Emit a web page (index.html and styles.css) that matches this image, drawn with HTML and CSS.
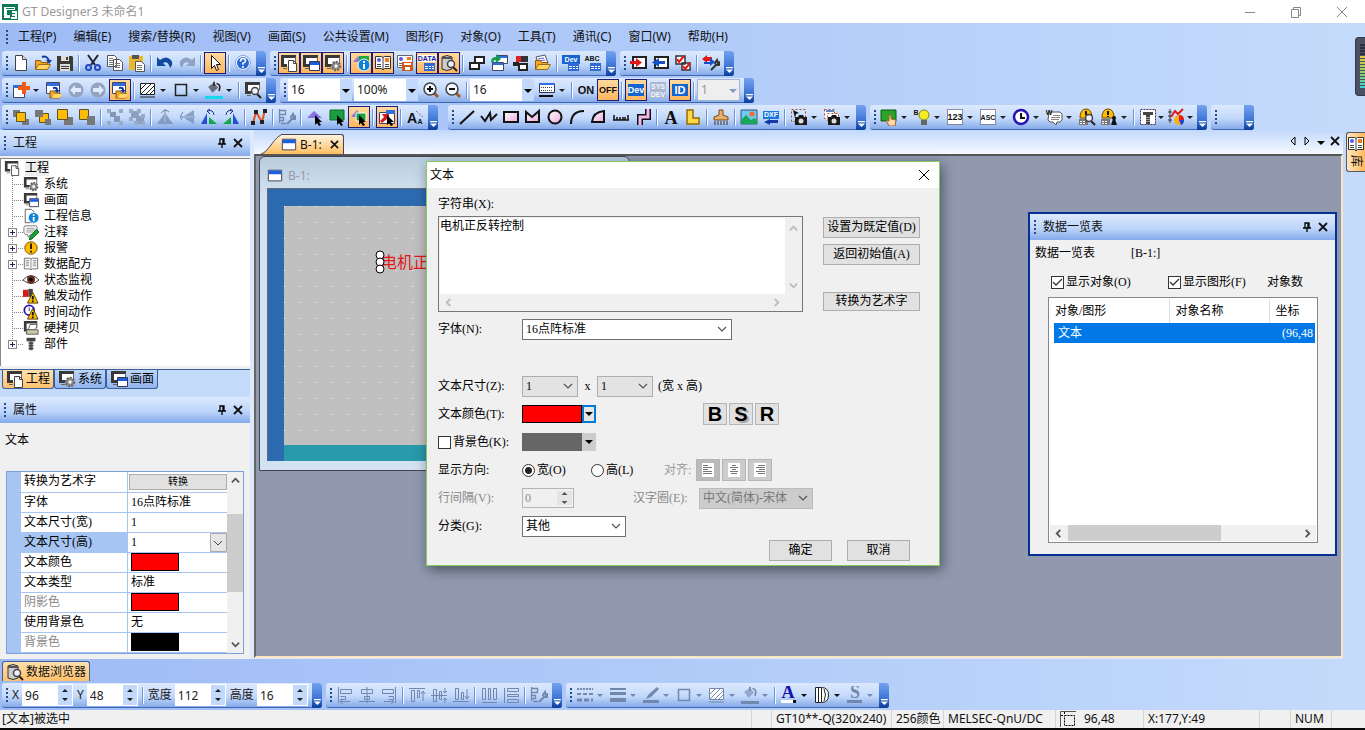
FILE: index.html
```html
<!DOCTYPE html>
<html lang="zh-CN">
<head>
    <meta charset="UTF-8">
    <meta name="viewport" content="width=device-width, initial-scale=1.0">
    <title>GT Designer3 未命名1</title>
    <link rel="stylesheet" href="styles.css">
</head>
<body>
<svg class="paints" aria-hidden="true">
    <linearGradient id="pink" x1="0" x2="1" y2="1"><stop offset="0" stop-color="#fff"/><stop offset="1" stop-color="#e9a9dc"/></linearGradient>
    <linearGradient id="tabfill" x2="0" y2="1"><stop offset="0" stop-color="#fff3df"/><stop offset="1" stop-color="#ffbe5f"/></linearGradient>
</svg>
<svg class="sprite" aria-hidden="true">
    <symbol id="scr" viewBox="0 0 18 18"><path d="M3 3h13v9H3z" fill="#fff"/><path d="M1 1h15v3H4v6h3v3H1z" fill="#383838"/><path d="M15 3h1v6h-1zM3 14h4v1H3z" fill="#666"/></symbol>
    <symbol id="win" viewBox="0 0 18 18"><path d="M1.500 2.500h15v12h-15z" fill="#fff" stroke="#334"/><path d="M2 3h14v4H2z" fill="#1b5fe0"/></symbol>
    <symbol id="folder" viewBox="0 0 18 18"><path d="M1.500 6.500h5l1 2h6v7h-12z" fill="#f5a623" stroke="#8a5a12"/><path d="M4.500 10.500h12l-3 5h-12z" fill="#ffd666" stroke="#a06a14"/></symbol>
    <symbol id="alarm" viewBox="0 0 18 18"><circle cx="9" cy="9" r="7" fill="#fb0" stroke="#6b4a00"/><path d="M8 4h2v6H8zM8 12h2v2H8z" fill="#111"/></symbol>
    <symbol id="warn" viewBox="0 0 18 18"><path d="M11 5l6 12H5z" fill="#fb0" stroke="#4b3800"/><path d="M10 9h2v4h-2zM10 14h2v2h-2z" fill="#111"/></symbol>
    <symbol id="info" viewBox="0 0 18 18"><circle cx="12" cy="11" r="6" fill="#0b84d8" stroke="#e8f6ff"/><path d="M11 7h2v2h-2zM11 10h2v5h-2z" fill="#fff"/></symbol>
    <symbol id="mag" viewBox="0 0 18 18"><path d="M13 13l4 4" stroke="#222" stroke-width="2"/><circle cx="11" cy="10" r="3.500" fill="#eef" stroke="#444" stroke-width="1.500"/></symbol>
    <symbol id="cur" viewBox="0 0 18 18"><path d="M9 7v10l2-2 2 3 2-1-2-3h3z" fill="#000"/></symbol>
    <symbol id="wrench" viewBox="0 0 18 18"><path d="M9 16l5-5m0 0l-1-2 2-3 1 3 2-1-1 3z" fill="none" stroke="currentColor" stroke-width="2"/></symbol>
    <symbol id="cam" viewBox="0 0 18 18"><path d="M5 9h3l1-2h4l1 2h3v8H5z" fill="#1a1a1a"/><circle cx="11" cy="13" r="2.500" fill="#ddd"/></symbol>
    <symbol id="tbl" viewBox="0 0 18 18"><path d="M6 9h11v8H6z" fill="#2f6bd4"/><path d="M7 12h3v1H7zM11 12h2v1h-2zM14 12h2v1h-2zM7 14h3v1H7zM11 14h2v1h-2zM14 14h2v1h-2z" fill="#fff"/></symbol>
    <symbol id="bell" viewBox="0 0 18 18"><path d="M1 11h9v6H1z" fill="#777"/><path d="M2 13h2v1H2zM5 13h2v1H5zM2 15h2v1H2zM5 15h2v1H5z" fill="#fff"/><path d="M2 10q0-9 6-9t6 9z" fill="#fb0" stroke="#6b4a00"/><path d="M7 3h2v4H7zM7 8h2v1H7z" fill="#111"/></symbol>

    <symbol id="app" viewBox="0 0 18 18"><path d="M1 1h16v16H1z" fill="#0c7a52"/><path d="M3 4h11v3H6v5h3v3H3z" fill="#fff"/><path d="M5 5h8v1H5z" fill="#0c7a52"/><path d="M11 8h5v8h-6v-2h4v-1h-3v-2h3v-1h-3z" fill="#fff"/></symbol>
    <symbol id="new" viewBox="0 0 18 18"><path d="M3.500 1.500h7l4 4v11h-11z" fill="#fff" stroke="#444"/><path d="M10.500 1.500v4h4" fill="#ddd" stroke="#444"/></symbol>
    <symbol id="open" viewBox="0 0 18 18"><use href="#folder"/><path d="M8 3q5-2 7 4" fill="none" stroke="#14389c" stroke-width="2"/><path d="M12 6h6l-3 4z" fill="#14389c"/></symbol>
    <symbol id="save" viewBox="0 0 18 18"><path d="M1 2h15l1 1v14H1z" fill="#3b3b33"/><path d="M5 2h8v5H5zM4 10h10v7H4z" fill="#ddd"/><path d="M10 3h2v3h-2zM5 12h8v1H5zM5 14h8v1H5z" fill="#3b3b33"/></symbol>
    <symbol id="cut" viewBox="0 0 18 18"><path d="M4 1l7 10M14 1L7 11" stroke="#223" stroke-width="2"/><circle cx="4.500" cy="13.500" r="2.500" fill="none" stroke="#2448c8" stroke-width="2"/><circle cx="13.500" cy="13.500" r="2.500" fill="none" stroke="#2448c8" stroke-width="2"/></symbol>
    <symbol id="copy" viewBox="0 0 18 18"><path d="M1.500 1.500h7l2 2v9h-9zM7.500 5.500h6l3 3v8h-9z" fill="#fff" stroke="#555"/><path d="M3 4.500h4M3 6.500h4M3 8.500h4M3 10.500h4M9 9.500h5M9 11.500h5M9 13.500h5" stroke="#777"/></symbol>
    <symbol id="paste" viewBox="0 0 18 18"><path d="M1 2h14v14H1z" fill="#e8b92e"/><path d="M4 1h7v4H4z" fill="#555"/><path d="M7.500 7.500h6l3 3v7h-9z" fill="#fff" stroke="#555"/><path d="M9 11.500h5M9 13.500h5M9 15.500h5" stroke="#777"/></symbol>
    <symbol id="undo" viewBox="0 0 18 18"><path d="M1 3v9h9l-3-3q5-3 7 5 4-4 1-8-5-5-11 0z" fill="#114a9c"/></symbol>
    <symbol id="redo" viewBox="0 0 18 18"><path d="M17 3v9H8l3-3q-5-3-7 5-4-4-1-8 5-5 11 0z" fill="#8fa3c4"/></symbol>
    <symbol id="arrow" viewBox="0 0 18 18"><path d="M5.500 1.500v13l3-3 2 5 2-1-2-5h4z" fill="#fff" stroke="#111"/></symbol>
    <symbol id="help" viewBox="0 0 18 18"><circle cx="9" cy="9" r="7.500" fill="#fff" stroke="#7da0e0"/><circle cx="9" cy="9" r="6" fill="#2565d8"/><path d="M6.500 7.500q0-3 2.500-3t2.500 2.200q0 1.500-2.500 2.500v1.500M9 12v2" fill="none" stroke="#fff" stroke-width="1.700"/></symbol>

    <symbol id="s-page" viewBox="0 0 18 18"><use href="#scr"/><path d="M8.500 6.500h5l3 3v8h-8z" fill="#fff" stroke="#444"/><path d="M13.500 6.500v3h3" fill="none" stroke="#444"/></symbol>
    <symbol id="s-win" viewBox="0 0 18 18"><use href="#scr"/><path d="M7.500 7.500h10v9h-10z" fill="#fff" stroke="#335"/><path d="M8 8h9v3H8z" fill="#1b5fe0"/></symbol>
    <symbol id="s-gear" viewBox="0 0 18 18"><use href="#scr"/><circle cx="12" cy="12" r="4" fill="#999" stroke="#666" stroke-width="2.500" stroke-dasharray="2 1"/><circle cx="12" cy="12" r="1.500" fill="#fff"/></symbol>
    <symbol id="s-info" viewBox="0 0 18 18"><path d="M1 8l5-6 5 6z" fill="#8e7be0"/><path d="M7 2h10v7H7z" fill="#24a83a"/><use href="#info"/></symbol>
    <symbol id="book" viewBox="0 0 18 18"><path d="M1.500 2.500h6l1.500 1 1.500-1h6v12h-6l-1.500 1.500-1.500-1.500h-6z" fill="#fff" stroke="#333"/><circle cx="5" cy="6" r="2" fill="#5a5ae0"/><path d="M11 4h4v4h-4z" fill="#f07818"/><path d="M3 10.500h4M3 12.500h4M11 10.500h4M11 12.500h4M9 3v12" stroke="#444"/></symbol>
    <symbol id="book2" viewBox="0 0 18 18"><path d="M1.500 1.500h15v12h-15z" fill="#fff" stroke="#666"/><circle cx="5" cy="5" r="2" fill="#5a5ae0"/><path d="M11 3h4v3h-4z" fill="#f07818"/><path d="M3 9.500h3M3 11.500h3" stroke="#666"/><path d="M6 8h11v9H6z" fill="#d05a18"/><path d="M8 9h7v2H8zM9 13h5v3H9z" fill="#fff"/></symbol>
    <symbol id="data" viewBox="0 0 18 18"><path d="M0 1h18v7H0z" fill="#fff"/><text x="9" y="7" class="glyph" fill="#1b1b9c">DATA</text><use href="#tbl"/></symbol>
    <symbol id="cyl" viewBox="0 0 18 18"><path d="M2 3q5-3 10 0v12q-5 3-10 0z" fill="#ccc" stroke="#333"/><path d="M2 3h10v2H2z" fill="#555"/><use href="#mag"/></symbol>
    <symbol id="wins" viewBox="0 0 18 18"><path d="M7 3h9v6H7zM2 9h9v6H2z" fill="#fff" stroke="#222" stroke-width="2"/></symbol>
    <symbol id="wingreen" viewBox="0 0 18 18"><path d="M6.500 1.500h11v8h-11zM2.500 8.500h11v8h-11z" fill="#fff" stroke="#446"/><path d="M7 2h10v2H7zM3 9h10v2H3z" fill="#2f6fe0"/><path d="M1 8q0-5 5-5V0l5 5-5 4V6Q3 6 3 9z" fill="#14a04a"/></symbol>
    <symbol id="redblk" viewBox="0 0 18 18"><path d="M4 2h5v6H4z" fill="#d22"/><path d="M9 2h7v6H9z" fill="#333"/><path d="M2 9h4v2H2zM7 10h8v6H7z" fill="#fff" stroke="#222" stroke-width="2"/></symbol>
    <symbol id="pages" viewBox="0 0 18 18"><path d="M2 3l9-2 3 8-9 3z" fill="#fff" stroke="#555"/><path d="M4 5l6-1M5 7l6-1" stroke="#5a5ae0"/><use href="#folder"/></symbol>
    <symbol id="devt" viewBox="0 0 18 18"><path d="M0 1h18v9H0z" fill="#1565d0"/><text x="9" y="8" class="glyph" fill="#fff">Dev</text><use href="#tbl"/></symbol>
    <symbol id="abct" viewBox="0 0 18 18"><text x="8" y="7" class="glyph" fill="#111">ABC</text><use href="#tbl"/></symbol>
    <symbol id="inred" viewBox="0 0 18 18"><path d="M3 3h13v11H3z" fill="#fff" stroke="#222" stroke-width="2"/><path d="M0 7h6V4l6 4.500-6 4.500v-3H0z" fill="#e01818"/></symbol>
    <symbol id="inblue" viewBox="0 0 18 18"><path d="M3 3h13v11H3z" fill="#fff" stroke="#222" stroke-width="2"/><path d="M13 7H7V4L0 8.500 7 13v-3h6z" fill="#1450c8"/></symbol>
    <symbol id="verify" viewBox="0 0 18 18"><path d="M2 2h9v8H2zM8 9h8v7H8z" fill="#fff" stroke="#333" stroke-width="1.500"/><path d="M3 5l2 3 5-6M9 12l2 3 5-6" fill="none" stroke="#e01818" stroke-width="2"/></symbol>
    <symbol id="comm" viewBox="0 0 18 18"><path d="M0 5l5-4v2h5v4H5v2z" fill="#e01818"/><path d="M13 8L8 12v-2H2v-2h6V4z" fill="#1450c8"/><use href="#wrench" color="#333"/></symbol>

    <symbol id="addwin" viewBox="0 0 18 18"><path d="M1.500 4.500h11v12h-11z" fill="#fff" stroke="#446"/><path d="M1 4h8v3H1z" fill="#2f6fe0"/><path d="M10 1h4v4h4v4h-4v4h-4V9H6V5h4z" fill="#f05a14"/></symbol>
    <symbol id="openwin" viewBox="0 0 18 18"><path d="M1.500 1.500h13v11h-13z" fill="#fff" stroke="#446"/><path d="M2 2h12v3H2z" fill="#2f6fe0"/><path d="M5 10h4l1 2h5v5H5z" fill="#f5a623" stroke="#8a5a12"/><path d="M7 17l2-4h8l-2 4z" fill="#ffd666"/><path d="M8 6q5-1 5 3h2l-3 3-3-3h2q0-2-3-1z" fill="#14389c"/></symbol>
    <symbol id="back" viewBox="0 0 18 18"><circle cx="9" cy="9" r="7.500" fill="#94a3bf"/><path d="M3 9l5-5v3h6v4H8v3z" fill="#dfeafc"/></symbol>
    <symbol id="fwd" viewBox="0 0 18 18"><circle cx="9" cy="9" r="7.500" fill="#94a3bf"/><path d="M15 9l-5-5v3H4v4h6v3z" fill="#dfeafc"/></symbol>
    <symbol id="hatch" viewBox="0 0 18 18"><path d="M1.500 2.500h14v11h-14z" fill="#fff" stroke="currentColor"/><path d="M2 8l5-5M2 13L12 3M7 13l8-8M11 13l4-4" stroke="currentColor"/><path d="M1 15h15v2H1z" fill="currentColor" opacity=".5"/></symbol>
    <symbol id="box" viewBox="0 0 18 18"><path d="M3.500 3.500h11v11h-11z" fill="none" stroke="currentColor" stroke-width="1.500"/></symbol>
    <symbol id="bucket" viewBox="0 0 18 18"><path d="M2 7l7-5 5 6-7 6z" fill="currentColor" opacity=".6"/><path d="M9 1v5M12 3q6 1 3 9" fill="none" stroke="currentColor" stroke-width="2"/></symbol>
    <symbol id="s-mag" viewBox="0 0 18 18"><use href="#scr"/><use href="#mag"/></symbol>
    <symbol id="zin" viewBox="0 0 18 18"><path d="M12 12l4 4" stroke="#a05a28" stroke-width="3"/><circle cx="8" cy="8" r="6" fill="#f2f6ff" stroke="#444" stroke-width="1.500"/><path d="M5 8h6M8 5v6" stroke="#111" stroke-width="2"/></symbol>
    <symbol id="zout" viewBox="0 0 18 18"><path d="M12 12l4 4" stroke="#a05a28" stroke-width="3"/><circle cx="8" cy="8" r="6" fill="#f2f6ff" stroke="#444" stroke-width="1.500"/><path d="M5 8h6" stroke="#111" stroke-width="2"/></symbol>
    <symbol id="keys" viewBox="0 0 18 18"><path d="M1.500 2.500h15v9h-15z" fill="#fff" stroke="#335"/><path d="M1 2h16v2H1z" fill="#2f6fe0"/><path d="M3 6.500h12M3 9.500h12" stroke="#444" stroke-dasharray="1 1"/><path d="M1 14h14v2H1z" fill="#111"/></symbol>
    <symbol id="on" viewBox="0 0 18 18"><text x="9" y="13" class="big" fill="#111">ON</text></symbol>
    <symbol id="off" viewBox="0 0 18 18"><text x="9" y="12" class="mid" fill="#111">OFF</text></symbol>
    <symbol id="dev" viewBox="0 0 18 18"><path d="M1 3h16v12H1z" fill="#1565d0"/><text x="9" y="12" class="mid" fill="#fff">Dev</text></symbol>
    <symbol id="sysdev" viewBox="0 0 18 18"><path d="M1 1h16v16H1z" fill="#aab8d2"/><text x="9" y="8" class="glyph" fill="#f4f8ff">SYS</text><text x="9" y="16" class="glyph" fill="#f4f8ff">DEV</text></symbol>
    <symbol id="id" viewBox="0 0 18 18"><path d="M1 3h16v12H1z" fill="#1565d0"/><text x="9" y="13" class="big" fill="#fff">ID</text></symbol>

    <symbol id="front" viewBox="0 0 18 18"><path d="M1 2h7v7H1zM10 11h7v6h-7z" fill="#777"/><path d="M4.500 4.500h9v9h-9z" fill="#fb0" stroke="#553"/></symbol>
    <symbol id="backz" viewBox="0 0 18 18"><path d="M5.500 5.500h9v9h-9z" fill="#fb0" stroke="#553"/><path d="M1 2h8v7H1zM11 11h6v6h-6z" fill="#777"/></symbol>
    <symbol id="fwd1" viewBox="0 0 18 18"><path d="M8 9h9v8H8z" fill="#777"/><path d="M1.500 1.500h10v10h-10z" fill="#fb0" stroke="#553"/></symbol>
    <symbol id="back1" viewBox="0 0 18 18"><path d="M1.500 1.500h9v10h-9z" fill="#fb0" stroke="#553"/><path d="M9 8h8v9H9z" fill="#777"/></symbol>
    <symbol id="group" viewBox="0 0 18 18"><path d="M4 4h6v5H4zM8 8h6v6H8z" fill="#8296b8"/><path d="M1 1h4v4H1zM13 1h4v4h-4zM1 13h4v4H1zM13 13h4v4h-4z" fill="#9aabc8"/></symbol>
    <symbol id="ungroup" viewBox="0 0 18 18"><path d="M3 3h8v7H3zM8 8h8v8H8z" fill="#8c9fbf"/><path d="M1 1h4v4H1zM9 1h4v4H9zM1 9h4v4H1zM13 6h4v4h-4zM6 13h4v4H6zM13 13h4v4h-4z" fill="#9aabc8"/></symbol>
    <symbol id="flipv" viewBox="0 0 18 18"><path d="M8 6v10H1zM10 6l7 10h-7z" fill="currentColor" opacity=".7"/><path d="M5 5q4-5 8-1M9 1v16" fill="none" stroke="currentColor"/></symbol>
    <symbol id="fliph" viewBox="0 0 18 18"><path d="M6 8h10V2zM6 10h10v6z" fill="currentColor" opacity=".7"/><path d="M5 4q-4 5-1 8M2 9h15" fill="none" stroke="currentColor"/></symbol>
    <symbol id="rotl" viewBox="0 0 18 18"><path d="M7 5v11H1z" fill="#2450d8"/><path d="M9 16V9l8 7z" fill="#10a848"/><path d="M8 3q5-2 6 4M10 1L7 3l3 3" fill="none" stroke="#15308c"/></symbol>
    <symbol id="rotr" viewBox="0 0 18 18"><path d="M11 5v11h6z" fill="#2450d8"/><path d="M9 16V9l-8 7z" fill="#10a848"/><path d="M10 3q-5-2-6 4M8 1l3 2-3 3" fill="none" stroke="#15308c"/></symbol>
    <symbol id="nodes" viewBox="0 0 18 18"><path d="M3 15L6 4l6 10 3-12" fill="none" stroke="#e0521a" stroke-width="2"/><path d="M1 13h4v4H1zM4 2h4v4H4zM10 12h4v4h-4zM13 1h4v4h-4z" fill="#222"/></symbol>
    <symbol id="aln-w" viewBox="0 0 18 18"><path d="M1.500 1v14M1.500 2.500h6v4h-6M1.500 9.500h4v3h-4M3 15.500h5" fill="none" stroke="currentColor" stroke-width="1.300"/><use href="#wrench"/></symbol>
    <symbol id="c-fig" viewBox="0 0 18 18"><path d="M1 10l7-7 8 7z" fill="#8673e0"/><use href="#cur"/></symbol>
    <symbol id="c-obj" viewBox="0 0 18 18"><path d="M2 2h14v10H2z" fill="#18a040" stroke="#0b6a24"/><use href="#cur"/></symbol>
    <symbol id="c-both" viewBox="0 0 18 18"><path d="M1 9l6-7 4 7z" fill="#8673e0"/><path d="M6 5h10v8H6z" fill="#18a040" stroke="#fff"/><use href="#cur"/></symbol>
    <symbol id="c-win" viewBox="0 0 18 18"><path d="M1.500 4.500h15v11h-15z" fill="#fff" stroke="#446"/><path d="M8 2h9v4H8z" fill="#2f6fe0"/><path d="M2 13l4-4-2-3h7v6l-2-1-5 4z" fill="#e01818"/><use href="#cur"/></symbol>
    <symbol id="aa" viewBox="0 0 18 18"><text x="6" y="15" class="huge" fill="#111">A</text><text x="14" y="16" class="glyph" fill="#111">A</text><path d="M10 3l7 6M10 15h3" stroke="#555" stroke-dasharray="1 1"/></symbol>

    <symbol id="line" viewBox="0 0 18 18"><path d="M2 16L16 3" stroke="#111" stroke-width="2"/></symbol>
    <symbol id="poly" viewBox="0 0 18 18"><path d="M1 8l4 5 5-8 1 7 6-6" fill="none" stroke="#111" stroke-width="2"/></symbol>
    <symbol id="rect" viewBox="0 0 18 18"><path d="M2 4h14v10H2z" fill="url(#pink)" stroke="#111" stroke-width="2"/></symbol>
    <symbol id="pgon" viewBox="0 0 18 18"><path d="M2 14V4l6 5 7-6v11z" fill="url(#pink)" stroke="#111" stroke-width="2"/></symbol>
    <symbol id="circ" viewBox="0 0 18 18"><circle cx="9" cy="9" r="6.500" fill="url(#pink)" stroke="#111" stroke-width="2"/></symbol>
    <symbol id="arc" viewBox="0 0 18 18"><path d="M3 16Q3 3 16 3" fill="none" stroke="#111" stroke-width="2"/></symbol>
    <symbol id="sector" viewBox="0 0 18 18"><path d="M2 14Q3 4 14 3v11z" fill="url(#pink)" stroke="#111" stroke-width="2"/></symbol>
    <symbol id="scale" viewBox="0 0 18 18"><path d="M1 12h16M2 7v5M5 9v3M8 9v3M11 9v3M13 9v3M16 7v5" stroke="#111" stroke-width="1.500"/></symbol>
    <symbol id="pipe" viewBox="0 0 18 18"><path d="M14 1v8H6v8" fill="none" stroke="#111" stroke-width="6"/><path d="M14 1v8H6v8" fill="none" stroke="#f0b8e8" stroke-width="3"/></symbol>
    <symbol id="txt" viewBox="0 0 18 18"><text x="9" y="16" class="serif" fill="#111">A</text></symbol>
    <symbol id="logo" viewBox="0 0 18 18"><path d="M3 2h6v8h6v6H3z" fill="#ffd84a" stroke="#9a6a00" stroke-width="1.500"/></symbol>
    <symbol id="stamp" viewBox="0 0 18 18"><path d="M7 2h4v5l5 2v3H2V9l5-2z" fill="#e7b06a" stroke="#7a4a14"/><path d="M3 13v4M6 13v4M9 13v4M12 13v4M15 13v4" stroke="#333"/></symbol>
    <symbol id="image" viewBox="0 0 18 18"><path d="M1 2h16v14H1z" fill="#6cc8f4" stroke="#357"/><circle cx="12" cy="6" r="2.500" fill="#f4682a"/><path d="M1 16v-4l5-5 5 5 3-2 3 2v4z" fill="#18a85a"/></symbol>
    <symbol id="dxf" viewBox="0 0 18 18"><path d="M1 3h16v8H1z" fill="#1878e0"/><text x="9" y="9" class="glyph" fill="#fff">DXF</text><path d="M16 12v3H8v2l-6-3 6-3v1z" fill="#1438a8"/></symbol>
    <symbol id="cam1" viewBox="0 0 18 18"><path d="M1.500 1.500h14v12h-14z" fill="none" stroke="#b04a20" stroke-dasharray="2 2"/><path d="M3 2l6 3-3 1-1 4z" fill="#111"/><use href="#cam"/></symbol>
    <symbol id="cam2" viewBox="0 0 18 18"><path d="M1.500 1.500h10v9h-10zM4.500 5.500h11v7h-11z" fill="#fff" stroke="#b04a20" stroke-dasharray="2 2"/><path d="M3 2h8v2H3z" fill="#58c"/><use href="#cam"/></symbol>

    <symbol id="touch" viewBox="0 0 18 18"><path d="M1 2h15v11H1z" fill="#28a428" stroke="#0b5a14"/><path d="M9 7v6l-3-1 3 6h6l1-6-5-1V7z" fill="#ffd9a8" stroke="#a0622a"/></symbol>
    <symbol id="lamp" viewBox="0 0 18 18"><text x="3" y="7" class="glyph" fill="#111">B</text><circle cx="11" cy="7" r="5" fill="#f2ec20" stroke="#8a8410"/><path d="M8 12h6v5H8z" fill="#666"/></symbol>
    <symbol id="n123" viewBox="0 0 18 18"><path d="M1.500 1.500h15v15h-15z" fill="#fff" stroke="#335" stroke-dasharray="1 1"/><text x="9" y="12" class="mid" fill="#111">123</text></symbol>
    <symbol id="asc" viewBox="0 0 18 18"><path d="M1.500 1.500h15v15h-15z" fill="#fff" stroke="#335" stroke-dasharray="1 1"/><text x="9" y="12" class="glyph" fill="#111">ASC</text></symbol>
    <symbol id="clock" viewBox="0 0 18 18"><circle cx="9" cy="9" r="7" fill="#fff" stroke="#2412b8" stroke-width="2.500"/><path d="M9 5v5h4" fill="none" stroke="#111" stroke-width="2"/></symbol>
    <symbol id="cmt" viewBox="0 0 18 18"><path d="M4 4h11l2 2v6l-2 2h-3l-1 3-3-3H5l-2-2z" fill="#fff" stroke="#555"/><path d="M8 7.500h7M6 9.500h9M6 11.500h8" stroke="#888"/><text x="4" y="7" class="glyph" fill="#111">W</text></symbol>
    <symbol id="alsrch" viewBox="0 0 18 18"><use href="#bell"/><use href="#mag"/></symbol>
    <symbol id="alusr" viewBox="0 0 18 18"><use href="#bell"/><circle cx="14" cy="10" r="2" fill="#111"/><path d="M13 11h2l2 6h-6z" fill="#111"/></symbol>
    <symbol id="part" viewBox="0 0 18 18"><path d="M1.500 1.500h15v15h-15z" fill="#fff" stroke="#335" stroke-dasharray="2 1"/><path d="M4 4h10v3h-3v9H7V7H4z" fill="#444"/><path d="M7 9.500h4M7 11.500h4M7 13.500h4" stroke="#999"/></symbol>
    <symbol id="chart" viewBox="0 0 18 18"><path d="M2 1v14M0 4h4M0 8h4M0 12h4" stroke="#333"/><path d="M3 9l4-6 3 3 5-5" fill="none" stroke="#e01818" stroke-width="2"/><circle cx="11" cy="12" r="5" fill="#ffb010"/><path d="M11 7v5h5q0-5-5-5" fill="#e02020"/><path d="M11 12h5q0 4-3 5z" fill="#2040d8"/></symbol>

    <symbol id="pginfo" viewBox="0 0 18 18"><path d="M2.500 1.500h7l4 4v11h-11z" fill="#fff" stroke="#555"/><use href="#info"/></symbol>
    <symbol id="note" viewBox="0 0 18 18"><path d="M2 2h13l1 2v6l-2 2H8l-2 3-1-3H3l-2-2V4z" fill="#f4f4f4" stroke="#777"/><path d="M4 5h9M4 7h9M4 9h7" stroke="#999"/><path d="M15 6l3 3-8 8-3 1 1-4z" fill="#10a830" stroke="#0b5a1c"/></symbol>
    <symbol id="recipe" viewBox="0 0 18 18"><path d="M1.500 2.500h6l1.500 1 1.500-1h6v12h-6l-1.500 1-1.500-1h-6z" fill="#fff" stroke="#666"/><path d="M3 5h4M3 7h4M3 9h4M3 11h4M11 5h4M11 7h4M11 9h4M11 11h4M9 3v12" stroke="#888"/></symbol>
    <symbol id="eye" viewBox="0 0 18 18"><path d="M0 9q9-10 18 0-9 8-18 0z" fill="#fff" stroke="#333"/><circle cx="9" cy="8.500" r="4.500" fill="#6b2a1a"/><circle cx="9" cy="8.500" r="2" fill="#000"/></symbol>
    <symbol id="trig" viewBox="0 0 18 18"><path d="M0 2h6v8H0z" fill="#e01818"/><path d="M6 1h5v9H6z" fill="#444"/><use href="#warn"/></symbol>
    <symbol id="timea" viewBox="0 0 18 18"><circle cx="7" cy="7" r="5.500" fill="#fff" stroke="#2412b8" stroke-width="2"/><path d="M7 4v4" stroke="#222"/><use href="#warn"/></symbol>
    <symbol id="hard" viewBox="0 0 18 18"><use href="#scr"/><path d="M8 5h8l-2 6H6z" fill="#fff" stroke="#555"/><path d="M4 11h13v5H4z" fill="#c9c9a8" stroke="#555"/></symbol>
    <symbol id="bolt" viewBox="0 0 18 18"><path d="M4 2h10v4H4z" fill="#444"/><path d="M7 6h4v10H7z" fill="#666"/><path d="M6 8h6M6 11h6M6 14h6" stroke="#333"/></symbol>

    <symbol id="a-l" viewBox="0 0 18 18"><path d="M2.500 1v16M4.500 3.500h11v4h-11zM4.500 10.500h5v3h-5M5 15.500h9M7 13l-3 2.500L7 18" fill="none" stroke="currentColor"/></symbol>
    <symbol id="a-c" viewBox="0 0 18 18"><path d="M9 1v16M3.500 3.500h11v4h-11zM6.500 10.500h5v3h-5zM1 15.500h16" fill="none" stroke="currentColor"/></symbol>
    <symbol id="a-r" viewBox="0 0 18 18"><path d="M15.500 1v16M2.500 3.500h11v4h-11zM8.500 10.500h5v3h-5M4 15.500h9M11 13l3 2.500L11 18" fill="none" stroke="currentColor"/></symbol>
    <symbol id="a-t" viewBox="0 0 18 18"><path d="M1 2.500h16M3.500 4.500h3v11h-3zM9.500 4.500h2v7h-2zM15 5v10M13 8l2-3 2 3" fill="none" stroke="currentColor"/></symbol>
    <symbol id="a-m" viewBox="0 0 18 18"><path d="M1 9.500h16M3.500 3.500h3v12h-3zM9.500 5.500h2v8h-2zM15 2v5M13 5l2 2 2-2M15 17v-5M13 14l2-2 2 2" fill="none" stroke="currentColor"/></symbol>
    <symbol id="a-b" viewBox="0 0 18 18"><path d="M1 15.500h16M3.500 2.500h3v11h-3zM9.500 6.500h2v7h-2zM15 3v10M13 10l2 3 2-3" fill="none" stroke="currentColor"/></symbol>
    <symbol id="d-h" viewBox="0 0 18 18"><path d="M2.500 2.500h3v11h-3zM8.500 2.500h2v11h-2zM13.500 2.500h3v11h-3zM2 16.500h15" fill="none" stroke="currentColor"/></symbol>
    <symbol id="d-v" viewBox="0 0 18 18"><path d="M5.500 2.500h11v3h-11zM5.500 8.500h11v2h-11zM5.500 13.500h11v3h-11zM2.500 2v15" fill="none" stroke="currentColor"/></symbol>
    <symbol id="l-style" viewBox="0 0 18 18"><path d="M1 3h16" stroke="currentColor" stroke-width="2" stroke-dasharray="2 1"/><path d="M1 8h16" stroke="currentColor" stroke-width="2" stroke-dasharray="4 2"/><path d="M1 14h16" stroke="currentColor" stroke-width="3" stroke-dasharray="5 2"/></symbol>
    <symbol id="l-w" viewBox="0 0 18 18"><path d="M1 2h16v2H1zM1 6h16v3H1zM1 12h16v4H1z" fill="currentColor"/></symbol>
    <symbol id="pen" viewBox="0 0 18 18"><path d="M15 1l2 2-8 8-5 2 2-4zM1 14h16v3H1z" fill="currentColor"/></symbol>
    <symbol id="a-fill" viewBox="0 0 18 18"><text x="8" y="12" class="serif" fill="#1a12a8">A</text><path d="M1 14h12v3H1z" fill="#fff"/><path d="M13 14h3v3h-3z" fill="#111"/></symbol>
    <symbol id="d3d" viewBox="0 0 18 18"><path d="M2.500 1.500h6q7 0 7 7.500t-7 7.500h-6z" fill="#fff" stroke="#222"/><path d="M5.500 2v14M8.500 2v14M11 3q3 6 0 12" fill="none" stroke="#222"/></symbol>
    <symbol id="s-sh" viewBox="0 0 18 18"><text x="9" y="12" class="serif" fill="#7287ad">S</text><path d="M1 14h15v3H1z" fill="#7287ad"/></symbol>
    <symbol id="pin" viewBox="0 0 10 10"><path d="M3 1h4v5H3zM6 1v5M1 6h8M5 6v4" fill="none" stroke="#000" stroke-width="1.300"/></symbol>
    <symbol id="x" viewBox="0 0 10 10"><path d="M1 1l8 8M9 1L1 9" fill="none" stroke="currentColor" stroke-width="1.800"/></symbol>
    <symbol id="xthin" viewBox="0 0 12 12"><path d="M1 1l10 10M11 1L1 11" fill="none" stroke="currentColor"/></symbol>
    <symbol id="up" viewBox="0 0 10 10"><path d="M1 7l4-4 4 4" fill="none" stroke="currentColor" stroke-width="2"/></symbol>
    <symbol id="down" viewBox="0 0 10 10"><path d="M1 3l4 4 4-4" fill="none" stroke="currentColor" stroke-width="2"/></symbol>
    <symbol id="left" viewBox="0 0 10 10"><path d="M7 1L3 5l4 4" fill="none" stroke="currentColor" stroke-width="2"/></symbol>
    <symbol id="right" viewBox="0 0 10 10"><path d="M3 1l4 4-4 4" fill="none" stroke="currentColor" stroke-width="2"/></symbol>
    <symbol id="spin" viewBox="0 0 8 14"><path d="M1 4l3-3 3 3zM1 10l3 3 3-3z" fill="currentColor"/></symbol>
</svg>

<header class="titlebar">
    <svg class="ic"><use href="#app"/></svg>
    <span class="app-name">GT Designer3 未命名1</span>
    <button class="sys" aria-label="最小化"><svg viewBox="0 0 12 12"><path d="M1 6.500h10" stroke="#888"/></svg></button>
    <button class="sys" aria-label="还原"><svg viewBox="0 0 12 12"><path d="M1.500 3.500h7v8h-7zM3.500 3.500v-2h7v8h-2" fill="none" stroke="#888"/></svg></button>
    <button class="sys" aria-label="关闭"><svg viewBox="0 0 12 12"><use href="#xthin" color="#888"/></svg></button>
</header>

<div class="frame">
    <nav class="menu">
        <i class="grip"></i>
        <a href="#">工程(P)</a><a href="#">编辑(E)</a><a href="#">搜索/替换(R)</a><a href="#">视图(V)</a><a href="#">画面(S)</a><a href="#">公共设置(M)</a><a href="#">图形(F)</a><a href="#">对象(O)</a><a href="#">工具(T)</a><a href="#">通讯(C)</a><a href="#">窗口(W)</a><a href="#">帮助(H)</a>
    </nav>

    <div class="bars">
        <div class="bar-row">
            <div class="bar"><i class="grip"></i>
                <button class="tb" aria-label="新建"><svg class="ic"><use href="#new"/></svg></button>
                <button class="tb" aria-label="打开"><svg class="ic"><use href="#open"/></svg></button>
                <button class="tb" aria-label="保存"><svg class="ic"><use href="#save"/></svg></button>
                <i class="sep"></i>
                <button class="tb" aria-label="剪切"><svg class="ic"><use href="#cut"/></svg></button>
                <button class="tb" aria-label="复制"><svg class="ic"><use href="#copy"/></svg></button>
                <button class="tb" aria-label="粘贴"><svg class="ic"><use href="#paste"/></svg></button>
                <i class="sep"></i>
                <button class="tb" aria-label="撤销"><svg class="ic"><use href="#undo"/></svg></button>
                <button class="tb" aria-label="恢复"><svg class="ic"><use href="#redo"/></svg></button>
                <i class="sep"></i>
                <button class="tb on" aria-label="选择"><svg class="ic"><use href="#arrow"/></svg></button>
                <i class="sep"></i>
                <button class="tb" aria-label="帮助"><svg class="ic"><use href="#help"/></svg></button>
                <button class="more" aria-label="更多"></button>
            </div>
            <div class="bar"><i class="grip"></i>
                <button class="tb on" aria-label="工程树"><svg class="ic"><use href="#s-page"/></svg></button>
                <button class="tb on" aria-label="画面树"><svg class="ic"><use href="#s-win"/></svg></button>
                <button class="tb on" aria-label="系统树"><svg class="ic"><use href="#s-gear"/></svg></button>
                <i class="sep"></i>
                <button class="tb on" aria-label="属性"><svg class="ic"><use href="#s-info"/></svg></button>
                <button class="tb on" aria-label="库"><svg class="ic"><use href="#book"/></svg></button>
                <button class="tb" aria-label="库编辑"><svg class="ic"><use href="#book2"/></svg></button>
                <button class="tb on" aria-label="数据一览"><svg class="ic"><use href="#data"/></svg></button>
                <button class="tb on" aria-label="数据浏览器"><svg class="ic"><use href="#cyl"/></svg></button>
                <i class="sep"></i>
                <button class="tb" aria-label="层叠"><svg class="ic"><use href="#wins"/></svg></button>
                <button class="tb" aria-label="切换"><svg class="ic"><use href="#wingreen"/></svg></button>
                <button class="tb" aria-label="分类"><svg class="ic"><use href="#redblk"/></svg></button>
                <button class="tb" aria-label="部件图像"><svg class="ic"><use href="#pages"/></svg></button>
                <i class="sep"></i>
                <button class="tb" aria-label="软元件"><svg class="ic"><use href="#devt"/></svg></button>
                <button class="tb" aria-label="字符串"><svg class="ic"><use href="#abct"/></svg></button>
                <button class="more" aria-label="更多"></button>
            </div>
            <div class="bar"><i class="grip"></i>
                <button class="tb" aria-label="写入"><svg class="ic"><use href="#inred"/></svg></button>
                <button class="tb" aria-label="读取"><svg class="ic"><use href="#inblue"/></svg></button>
                <button class="tb" aria-label="校验"><svg class="ic"><use href="#verify"/></svg></button>
                <i class="sep"></i>
                <button class="tb" aria-label="通讯设置"><svg class="ic"><use href="#comm"/></svg></button>
                <button class="more" aria-label="更多"></button>
            </div>
        </div>

        <div class="bar-row">
            <div class="bar"><i class="grip"></i>
                <button class="tb drop" aria-label="新建画面"><svg class="ic"><use href="#addwin"/></svg></button>
                <button class="tb" aria-label="打开画面"><svg class="ic"><use href="#openwin"/></svg></button>
                <button class="tb" aria-label="上一个"><svg class="ic"><use href="#back"/></svg></button>
                <button class="tb" aria-label="下一个"><svg class="ic"><use href="#fwd"/></svg></button>
                <button class="tb on" aria-label="画面图像"><svg class="ic"><use href="#openwin"/></svg></button>
                <i class="sep"></i>
                <button class="tb drop" aria-label="图案"><svg class="ic"><use href="#hatch"/></svg></button>
                <button class="tb drop" aria-label="边框"><svg class="ic"><use href="#box"/></svg></button>
                <button class="tb drop" aria-label="填充"><svg class="ic cyan"><use href="#bucket"/></svg></button>
                <i class="sep"></i>
                <button class="tb" aria-label="预览"><svg class="ic"><use href="#s-mag"/></svg></button>
                <button class="more" aria-label="更多"></button>
            </div>
            <div class="bar"><i class="grip"></i>
                <select class="combo" aria-label="网格"><option>16</option></select>
                <select class="combo" aria-label="显示比例"><option>100%</option></select>
                <button class="tb" aria-label="放大"><svg class="ic"><use href="#zin"/></svg></button>
                <button class="tb" aria-label="缩小"><svg class="ic"><use href="#zout"/></svg></button>
                <i class="sep"></i>
                <select class="combo" aria-label="字号"><option>16</option></select>
                <button class="tb drop" aria-label="网格颜色"><svg class="ic"><use href="#keys"/></svg></button>
                <i class="sep"></i>
                <button class="tb" aria-label="ON"><svg class="ic"><use href="#on"/></svg></button>
                <button class="tb on" aria-label="OFF"><svg class="ic"><use href="#off"/></svg></button>
                <i class="sep"></i>
                <button class="tb on" aria-label="Dev"><svg class="ic"><use href="#dev"/></svg></button>
                <button class="tb" aria-label="SYS DEV"><svg class="ic"><use href="#sysdev"/></svg></button>
                <button class="tb on" aria-label="ID"><svg class="ic"><use href="#id"/></svg></button>
                <i class="sep"></i>
                <select class="combo off" aria-label="语言列" disabled><option>1</option></select>
                <button class="more" aria-label="更多"></button>
            </div>
        </div>

        <div class="bar-row">
            <div class="bar"><i class="grip"></i>
                <button class="tb" aria-label="最前面"><svg class="ic"><use href="#front"/></svg></button>
                <button class="tb" aria-label="最后面"><svg class="ic"><use href="#backz"/></svg></button>
                <button class="tb" aria-label="前移"><svg class="ic"><use href="#fwd1"/></svg></button>
                <button class="tb" aria-label="后移"><svg class="ic"><use href="#back1"/></svg></button>
                <i class="sep"></i>
                <button class="tb" aria-label="组合"><svg class="ic"><use href="#group"/></svg></button>
                <button class="tb" aria-label="取消组合"><svg class="ic"><use href="#ungroup"/></svg></button>
                <i class="sep"></i>
                <button class="tb dim" aria-label="左右翻转"><svg class="ic"><use href="#flipv"/></svg></button>
                <button class="tb dim" aria-label="上下翻转"><svg class="ic"><use href="#fliph"/></svg></button>
                <button class="tb" aria-label="左转90度"><svg class="ic"><use href="#rotl"/></svg></button>
                <button class="tb" aria-label="右转90度"><svg class="ic"><use href="#rotr"/></svg></button>
                <i class="sep"></i>
                <button class="tb" aria-label="编辑顶点"><svg class="ic"><use href="#nodes"/></svg></button>
                <i class="sep"></i>
                <button class="tb dim" aria-label="对齐设置"><svg class="ic"><use href="#aln-w"/></svg></button>
                <i class="sep"></i>
                <button class="tb" aria-label="选择图形"><svg class="ic"><use href="#c-fig"/></svg></button>
                <button class="tb" aria-label="选择对象"><svg class="ic"><use href="#c-obj"/></svg></button>
                <button class="tb on" aria-label="选择图形和对象"><svg class="ic"><use href="#c-both"/></svg></button>
                <i class="sep"></i>
                <button class="tb on" aria-label="选择范围"><svg class="ic"><use href="#c-win"/></svg></button>
                <i class="sep"></i>
                <button class="tb" aria-label="文本缩放"><svg class="ic"><use href="#aa"/></svg></button>
                <button class="more" aria-label="更多"></button>
            </div>
            <div class="bar wide-gap"><i class="grip"></i>
                <button class="tb" aria-label="直线"><svg class="ic"><use href="#line"/></svg></button>
                <button class="tb" aria-label="折线"><svg class="ic"><use href="#poly"/></svg></button>
                <button class="tb" aria-label="矩形"><svg class="ic"><use href="#rect"/></svg></button>
                <button class="tb" aria-label="多边形"><svg class="ic"><use href="#pgon"/></svg></button>
                <button class="tb" aria-label="圆"><svg class="ic"><use href="#circ"/></svg></button>
                <button class="tb" aria-label="圆弧"><svg class="ic"><use href="#arc"/></svg></button>
                <button class="tb" aria-label="扇形"><svg class="ic"><use href="#sector"/></svg></button>
                <button class="tb" aria-label="刻度"><svg class="ic"><use href="#scale"/></svg></button>
                <button class="tb" aria-label="配管"><svg class="ic"><use href="#pipe"/></svg></button>
                <i class="sep"></i>
                <button class="tb" aria-label="文本"><svg class="ic"><use href="#txt"/></svg></button>
                <button class="tb" aria-label="艺术字"><svg class="ic"><use href="#logo"/></svg></button>
                <i class="sep"></i>
                <button class="tb" aria-label="涂刷"><svg class="ic"><use href="#stamp"/></svg></button>
                <i class="sep"></i>
                <button class="tb" aria-label="图像"><svg class="ic"><use href="#image"/></svg></button>
                <button class="tb" aria-label="DXF"><svg class="ic"><use href="#dxf"/></svg></button>
                <i class="sep"></i>
                <button class="tb drop" aria-label="截取"><svg class="ic"><use href="#cam1"/></svg></button>
                <button class="tb drop" aria-label="截取窗口"><svg class="ic"><use href="#cam2"/></svg></button>
                <button class="more" aria-label="更多"></button>
            </div>
            <div class="bar"><i class="grip"></i>
                <button class="tb drop" aria-label="触摸开关"><svg class="ic"><use href="#touch"/></svg></button>
                <button class="tb drop" aria-label="指示灯"><svg class="ic"><use href="#lamp"/></svg></button>
                <button class="tb drop" aria-label="数值显示"><svg class="ic"><use href="#n123"/></svg></button>
                <button class="tb drop" aria-label="ASCII显示"><svg class="ic"><use href="#asc"/></svg></button>
                <button class="tb drop" aria-label="时刻显示"><svg class="ic"><use href="#clock"/></svg></button>
                <button class="tb drop" aria-label="注释显示"><svg class="ic"><use href="#cmt"/></svg></button>
                <button class="tb" aria-label="报警履历"><svg class="ic"><use href="#alsrch"/></svg></button>
                <button class="tb drop" aria-label="用户报警"><svg class="ic"><use href="#alusr"/></svg></button>
                <i class="sep"></i>
                <button class="tb drop snug" aria-label="部件显示"><svg class="ic"><use href="#part"/></svg></button>
                <button class="tb drop snug" aria-label="图表"><svg class="ic"><use href="#chart"/></svg></button>
                <button class="more" aria-label="更多"></button>
            </div>
            <div class="bar empty"><i class="grip"></i><button class="more" aria-label="更多"></button></div>
        </div>
    </div>

    <main class="work">
        <aside class="side">
            <div class="pane-head"><i class="grip"></i><b>工程</b><button aria-label="固定"><svg><use href="#pin"/></svg></button><button aria-label="关闭"><svg><use href="#x"/></svg></button></div>
            <div class="tree">
                <div class="root"><svg class="ic"><use href="#s-page"/></svg><span>工程</span></div>
                <ul>
                    <li><svg class="ic"><use href="#s-gear"/></svg>系统</li>
                    <li><svg class="ic"><use href="#s-win"/></svg>画面</li>
                    <li><svg class="ic"><use href="#pginfo"/></svg>工程信息</li>
                    <li class="plus"><svg class="ic"><use href="#note"/></svg>注释</li>
                    <li class="plus"><svg class="ic"><use href="#alarm"/></svg>报警</li>
                    <li class="plus"><svg class="ic"><use href="#recipe"/></svg>数据配方</li>
                    <li><svg class="ic"><use href="#eye"/></svg>状态监视</li>
                    <li><svg class="ic"><use href="#trig"/></svg>触发动作</li>
                    <li><svg class="ic"><use href="#timea"/></svg>时间动作</li>
                    <li><svg class="ic"><use href="#hard"/></svg>硬拷贝</li>
                    <li class="plus"><svg class="ic"><use href="#bolt"/></svg>部件</li>
                </ul>
            </div>
            <div class="side-tabs">
                <button class="active"><svg class="ic"><use href="#s-page"/></svg>工程</button>
                <button><svg class="ic"><use href="#s-gear"/></svg>系统</button>
                <button><svg class="ic"><use href="#s-win"/></svg>画面</button>
            </div>
            <div class="pane-head"><i class="grip"></i><b>属性</b><button aria-label="固定"><svg><use href="#pin"/></svg></button><button aria-label="关闭"><svg><use href="#x"/></svg></button></div>
            <div class="props">
                <p>文本</p>
                <div class="grid-box">
                    <table class="prop-table">
                        <tr><th>转换为艺术字</th><td class="flush"><button class="btn conv">转换</button></td></tr>
                        <tr><th>字体</th><td>16点阵标准</td></tr>
                        <tr><th>文本尺寸(宽)</th><td>1</td></tr>
                        <tr class="cur"><th>文本尺寸(高)</th><td class="flush"><select aria-label="文本尺寸(高)"><option>1</option></select></td></tr>
                        <tr><th>文本颜色</th><td><i class="chip red"></i></td></tr>
                        <tr><th>文本类型</th><td>标准</td></tr>
                        <tr class="gray"><th>阴影色</th><td><i class="chip red"></i></td></tr>
                        <tr><th>使用背景色</th><td>无</td></tr>
                        <tr class="gray"><th>背景色</th><td><i class="chip black"></i></td></tr>
                    </table>
                    <div class="vbar"><svg><use href="#up"/></svg><i class="thumb"></i><svg><use href="#down"/></svg></div>
                </div>
            </div>
        </aside>

        <section class="docs">
            <div class="doc-tabs">
                <svg class="slant" viewBox="0 0 22 20"><path d="M0 20C8 18 14 1 22 .5V20z" fill="url(#tabfill)"/><path d="M0 20C8 18 14 1 22 .5" fill="none" stroke="#445"/></svg>
                <button class="doc-tab"><svg class="ic"><use href="#win"/></svg>B-1:<svg class="tiny"><use href="#x"/></svg></button>
                <div class="doc-nav">
                    <button aria-label="向左"><svg viewBox="0 0 10 10"><path d="M7 1v8L3 5z" fill="none" stroke="#000"/></svg></button>
                    <button aria-label="向右"><svg viewBox="0 0 10 10"><path d="M3 1v8l4-4z" fill="none" stroke="#000"/></svg></button>
                    <button aria-label="列表"><svg viewBox="0 0 10 10"><path d="M1 5h8L5 9z"/></svg></button>
                    <button aria-label="关闭"><svg><use href="#x"/></svg></button>
                </div>
            </div>
            <div class="desktop">
                <div class="mdi">
                    <div class="mdi-title"><svg class="ic"><use href="#win"/></svg>B-1:</div>
                    <div class="screen">
                        <div class="dots">
                            <span class="label">电机正反转控制</span>
                            <svg class="handles" viewBox="0 0 10 24"><g fill="#fff" stroke="#000"><circle cx="5" cy="5" r="4"/><circle cx="5" cy="12" r="4"/><circle cx="5" cy="19" r="4"/></g></svg>
                        </div>
                    </div>
                </div>

                <div class="list-win">
                    <div class="pane-head"><i class="grip"></i><b>数据一览表</b><button aria-label="固定"><svg><use href="#pin"/></svg></button><button aria-label="关闭"><svg><use href="#x"/></svg></button></div>
                    <div class="list-body">
                        <div class="list-cap"><span>数据一览表</span><span>[B-1:]</span></div>
                        <div class="list-opts">
                            <label><input type="checkbox" checked>显示对象(O)</label>
                            <label><input type="checkbox" checked>显示图形(F)</label>
                            <span>对象数</span>
                        </div>
                        <div class="list-box">
                            <table>
                                <tr><th>对象/图形</th><th>对象名称</th><th>坐标</th></tr>
                                <tr class="sel"><td>文本</td><td></td><td class="pos">(96,48</td></tr>
                            </table>
                            <div class="hbar"><svg><use href="#left"/></svg><i class="thumb"></i><svg><use href="#right"/></svg></div>
                        </div>
                    </div>
                </div>

                <form class="dialog">
                    <div class="dlg-title"><span>文本</span><button type="button" aria-label="关闭"><svg viewBox="0 0 12 12"><use href="#xthin"/></svg></button></div>
                    <div class="dlg-body">
                        <div class="dlg-top">
                            <div class="str">
                                <label for="str">字符串(X):</label>
                                <div class="area">
                                    <textarea id="str">电机正反转控制</textarea>
                                    <div class="vbar pale"><svg><use href="#up"/></svg><svg><use href="#down"/></svg></div>
                                    <div class="hbar pale"><svg><use href="#left"/></svg><svg><use href="#right"/></svg></div>
                                </div>
                            </div>
                            <div class="actions">
                                <button type="button" class="btn">设置为既定值(D)</button>
                                <button type="button" class="btn">返回初始值(A)</button>
                                <button type="button" class="btn art">转换为艺术字</button>
                            </div>
                        </div>
                        <div class="row font-row"><label class="lb" for="font">字体(N):</label><select id="font" class="w-font"><option>16点阵标准</option></select></div>
                        <div class="row"><label class="lb" for="sw">文本尺寸(Z):</label><select id="sw" class="w-size face"><option>1</option></select><span class="times">x</span><select class="w-size face" aria-label="高"><option>1</option></select><span class="hint">(宽 x 高)</span></div>
                        <div class="row"><span class="lb">文本颜色(T):</span><button type="button" class="swatch red" aria-label="文本颜色"></button><button type="button" class="pick focus" aria-label="选择颜色"></button>
                            <span class="bsr"><button type="button">B</button><button type="button" class="shade">S</button><button type="button">R</button></span></div>
                        <div class="row"><label class="lb"><input type="checkbox">背景色(K):</label><button type="button" class="swatch dark" aria-label="背景色"></button><button type="button" class="pick" aria-label="选择背景色"></button></div>
                        <div class="row"><span class="lb">显示方向:</span><label class="dir"><input type="radio" name="dir" checked>宽(O)</label><label class="dir"><input type="radio" name="dir">高(L)</label>
                            <span class="al-lb">对齐:</span>
                            <span class="al">
                                <button type="button" disabled class="down" aria-label="左对齐"><svg viewBox="0 0 14 14"><path d="M1 0h12v14H1z" fill="#fff"/><path d="M2 2.500h5M2 4.500h9M2 6.500h5M2 8.500h9M2 10.500h9" stroke="#777"/></svg></button>
                                <button type="button" disabled aria-label="居中"><svg viewBox="0 0 14 14"><path d="M1 0h12v14H1z" fill="#fff"/><path d="M5 2.500h4M3 4.500h8M5 6.500h4M3 8.500h8M4 10.500h6" stroke="#777"/></svg></button>
                                <button type="button" disabled aria-label="右对齐"><svg viewBox="0 0 14 14"><path d="M1 0h12v14H1z" fill="#fff"/><path d="M5 2.500h7M3 4.500h9M6 6.500h6M3 8.500h9M5 10.500h7" stroke="#777"/></svg></button>
                            </span></div>
                        <div class="row gray"><label class="lb" for="gap">行间隔(V):</label><span class="spin"><input id="gap" value="0" disabled><svg><use href="#spin"/></svg></span>
                            <label class="kanji" for="kan">汉字圈(E):</label><select id="kan" class="w-kan" disabled><option>中文(简体)-宋体</option></select></div>
                        <div class="row"><label class="lb" for="cat">分类(G):</label><select id="cat" class="w-cat"><option>其他</option></select></div>
                        <div class="dlg-foot"><button type="button" class="btn">确定</button><button type="button" class="btn">取消</button></div>
                    </div>
                </form>
            </div>
        </section>

        <aside class="dock"><button class="lib"><svg class="ic"><use href="#book"/></svg><span>库</span></button></aside>
    </main>

    <footer class="lower">
        <button class="browser-tab"><svg class="ic"><use href="#cyl"/></svg>数据浏览器</button>
        <div class="bar-row">
            <div class="bar coords"><i class="grip"></i>
                <label>X<span class="num"><input value="96"><svg><use href="#spin"/></svg></span></label>
                <label>Y<span class="num"><input value="48"><svg><use href="#spin"/></svg></span></label>
                <i class="sep"></i>
                <label>宽度<span class="num"><input value="112"><svg><use href="#spin"/></svg></span></label>
                <label>高度<span class="num"><input value="16"><svg><use href="#spin"/></svg></span></label>
                <button class="more" aria-label="更多"></button>
            </div>
            <div class="bar dim"><i class="grip"></i>
                <button class="tb" aria-label="左对齐"><svg class="ic"><use href="#a-l"/></svg></button>
                <button class="tb" aria-label="水平居中"><svg class="ic"><use href="#a-c"/></svg></button>
                <button class="tb" aria-label="右对齐"><svg class="ic"><use href="#a-r"/></svg></button>
                <i class="sep"></i>
                <button class="tb" aria-label="上对齐"><svg class="ic"><use href="#a-t"/></svg></button>
                <button class="tb" aria-label="垂直居中"><svg class="ic"><use href="#a-m"/></svg></button>
                <button class="tb" aria-label="下对齐"><svg class="ic"><use href="#a-b"/></svg></button>
                <i class="sep"></i>
                <button class="tb" aria-label="横向等间隔"><svg class="ic"><use href="#d-h"/></svg></button>
                <button class="tb" aria-label="纵向等间隔"><svg class="ic"><use href="#d-v"/></svg></button>
                <i class="sep"></i>
                <button class="tb" aria-label="对齐"><svg class="ic"><use href="#aln-w"/></svg></button>
                <button class="more" aria-label="更多"></button>
            </div>
            <div class="bar dim"><i class="grip"></i>
                <button class="tb drop" aria-label="线型"><svg class="ic"><use href="#l-style"/></svg></button>
                <button class="tb drop" aria-label="线宽"><svg class="ic"><use href="#l-w"/></svg></button>
                <button class="tb drop" aria-label="线颜色"><svg class="ic"><use href="#pen"/></svg></button>
                <button class="tb drop" aria-label="边框"><svg class="ic"><use href="#box"/></svg></button>
                <button class="tb drop" aria-label="填充图案"><svg class="ic"><use href="#hatch"/></svg></button>
                <button class="tb drop" aria-label="填充色"><svg class="ic under"><use href="#bucket"/></svg></button>
                <i class="sep"></i>
                <button class="tb drop live" aria-label="文本颜色"><svg class="ic"><use href="#a-fill"/></svg></button>
                <button class="tb drop live" aria-label="文本类型"><svg class="ic"><use href="#d3d"/></svg></button>
                <button class="tb drop" aria-label="阴影色"><svg class="ic"><use href="#s-sh"/></svg></button>
                <button class="more" aria-label="更多"></button>
            </div>
        </div>
    </footer>
    <div class="meter"></div>
</div>

<div class="status">
    <span class="msg">[文本]被选中</span>
    <span class="c-blank"></span>
    <span class="c-type">GT10**-Q(320x240)</span>
    <span class="c-color">256颜色</span>
    <span class="c-plc">MELSEC-QnU/DC</span>
    <span class="c-pos"><svg viewBox="0 0 16 16"><path d="M.5 16V.5H16" fill="none" stroke="#555"/><path d="M4.500 4.500h10v10h-10zM4.500 1v3M1 4.500h3" fill="none" stroke="#000" stroke-dasharray="2 1"/></svg>96,48</span>
    <span class="c-xy">X:177,Y:49</span>
    <span class="c-gap"></span>
    <span class="c-num">NUM</span>
    <span class="c-end"></span>
</div>
</body>
</html>
```
FILE: styles.css
```css
*, *::before, *::after {
    box-sizing: border-box;
}
body {
    margin: 0;
    height: 100vh;
    display: flex;
    flex-direction: column;
    overflow: hidden;
    background: #000;
    font: 12px/16px "Noto Sans", "Noto Sans CJK SC", sans-serif;
    color: #111;
}
button, input, select, textarea {
    font: inherit;
    color: inherit;
    margin: 0;
    padding: 0;
    border: 0;
    border-radius: 0;
    background: none;
}
ul, p {
    margin: 0;
    padding: 0;
    list-style: none;
}
a {
    color: inherit;
    text-decoration: none;
}
svg {
    display: block;
    flex: none;
}
.sprite {
    display: none;
}
.paints {
    position: absolute;
    width: 0;
    height: 0;
}
.ic {
    width: 18px;
    height: 18px;
}
.glyph, .mid, .big, .huge, .serif {
    font-family: "Liberation Sans", sans-serif;
    font-weight: bold;
    text-anchor: middle;
}
.glyph { font-size: 7px; }
.mid { font-size: 9px; }
.big { font-size: 11px; }
.huge { font-size: 14px; }
.serif {
    font-family: "Liberation Serif", serif;
    font-size: 18px;
}

/* title bar */
.titlebar {
    display: flex;
    align-items: center;
    height: 23px;
    padding-left: 1px;
    background: #fff;
    color: #999;
}
.app-name {
    flex: 1;
    margin-left: 3px;
}
.sys {
    width: 46px;
    display: grid;
    place-items: center;
}
.sys svg {
    width: 12px;
    height: 12px;
}

.frame {
    flex: 1;
    min-height: 0;
    display: flex;
    flex-direction: column;
    background: linear-gradient(90deg, #9ebbf6, #c4dbfb);
}
.menu {
    display: flex;
    align-items: center;
    gap: 17px;
    height: 28px;
    padding-left: 2px;
}
.menu .grip {
    margin-right: -9px;
}
.grip {
    flex: none;
    width: 8px;
    height: 15px;
    background: repeating-linear-gradient(#2a4a86 0 2px, transparent 2px 4px) 4px 0 / 2px 100% no-repeat;
}

/* toolbars */
.bars {
    display: flex;
    flex-direction: column;
    gap: 2px;
}
.bar-row {
    display: flex;
    gap: 4px;
    padding-left: 2px;
    height: 25px;
}
.bar {
    display: flex;
    align-items: center;
    height: 25px;
    border-radius: 3px;
    border-bottom: 1px solid #3f68b4;
    background: linear-gradient(#dce9fd, #c3d9fb 55%, #86abe9);
    color: #222;
}
.wide-gap {
    margin-left: 6px;
}
.dim {
    color: #7287ad;
}
.live {
    color: #111;
}
.tb {
    flex: none;
    display: flex;
    align-items: center;
    justify-content: center;
    width: 22px;
    height: 22px;
}
.tb.on {
    border: 1px solid #1c1c7c;
    background: linear-gradient(#ffd9a0, #ffb65c);
}
.tb.drop {
    width: 33px;
    justify-content: flex-start;
    padding-left: 2px;
}
.tb.snug {
    width: 29px;
}
.drop::after {
    content: "";
    margin-left: 3px;
    border: 3px solid transparent;
    border-top-color: currentColor;
    border-bottom: 0;
}
.snug::after {
    margin-left: 1px;
}
.cyan {
    border-bottom: 3px solid #18d8f0;
}
.under {
    border-bottom: 3px solid #7287ad;
}
.sep {
    flex: none;
    width: 2px;
    height: 17px;
    margin: 0 2px;
    background: linear-gradient(90deg, #6d93d3 50%, #f4f8ff 50%);
}
.more {
    position: relative;
    width: 10px;
    height: 25px;
    align-self: flex-start;
    margin-left: 2px;
    border-radius: 0 3px 3px 0;
    background: linear-gradient(#74a2f0, #3e76d6 60%, #0a3d9c);
}
.more::after {
    content: "";
    position: absolute;
    left: 2px;
    bottom: 3px;
    width: 7px;
    height: 6px;
    background: #fff;
    clip-path: polygon(0 0, 100% 0, 100% 20%, 0 20%, 0 40%, 100% 40%, 50% 100%, 0 40%);
}
.empty {
    width: 43px;
    justify-content: space-between;
}
select {
    appearance: none;
}
.combo {
    width: 64px;
    height: 22px;
    margin-right: 2px;
    padding-left: 3px;
    background: url("data:image/svg+xml,%3Csvg xmlns='http://www.w3.org/2000/svg' width='12' height='22'%3E%3Cpath d='M0 0h12v22H0z' fill='%23c3d9fb'/%3E%3Cpath d='M2 10h8l-4 4z'/%3E%3C/svg%3E") right / 12px 22px no-repeat #fff;
}
.combo.off {
    width: 43px;
    border: 1px solid #a0b4d8;
    opacity: 1;
    color: #999;
    background-image: url("data:image/svg+xml,%3Csvg xmlns='http://www.w3.org/2000/svg' width='12' height='22'%3E%3Cpath d='M2 10h8l-4 4z' fill='%237f99c8'/%3E%3C/svg%3E");
    background-color: #eee;
}

/* work area */
.work {
    flex: 1;
    min-height: 0;
    display: flex;
}
.side {
    width: 250px;
    display: flex;
    flex-direction: column;
    background: #f0f0f0;
}
.pane-head {
    flex: none;
    display: flex;
    align-items: center;
    gap: 5px;
    height: 26px;
    padding-right: 6px;
    background: linear-gradient(#dce9fd, #bdd5fa 55%, #84aaea);
}
.pane-head b {
    flex: 1;
    font-weight: normal;
}
.pane-head button {
    width: 11px;
    height: 11px;
}
.pane-head svg {
    width: 10px;
    height: 10px;
}
.tree, .side-tabs, .props, .list-body, .dialog {
    font-family: "Liberation Serif", "Noto Sans CJK SC", serif;
    color: #000;
}
.tree {
    flex: none;
    height: 208px;
    margin-top: 2px;
    padding-top: 1px;
    border: 1px solid #888;
    border-width: 1px 0 0 1px;
    background: #fff;
}
.tree .ic {
    width: 16px;
    height: 16px;
    margin-right: 5px;
}
.root {
    display: flex;
    padding-left: 3px;
}
.root span {
    background: #eee;
}
.tree ul {
    background: repeating-linear-gradient(#888 0 1px, transparent 1px 2px) 11px 0 / 1px 170px no-repeat;
}
.tree li {
    display: flex;
    height: 16px;
    padding-left: 22px;
    background: repeating-linear-gradient(90deg, #888 0 1px, transparent 1px 2px) 13px 8px / 9px 1px no-repeat;
}
.plus::before {
    content: "";
    width: 9px;
    height: 9px;
    margin: 4px 6px 0 -15px;
    border: 1px solid #888;
    background:
        linear-gradient(#224, #224) center / 5px 1px no-repeat,
        linear-gradient(#224, #224) center / 1px 5px no-repeat,
        #fff;
}
.side-tabs {
    flex: none;
    display: flex;
    height: 28px;
    margin-top: 3px;
    padding-left: 2px;
    border-top: 1px solid #3b5e9c;
    background: #c4daf9;
}
.side-tabs button {
    display: flex;
    align-items: center;
    gap: 2px;
    height: 19px;
    padding: 0 3px;
    border: 1px solid #3b5e9c;
    border-top: 0;
    border-radius: 0 0 3px 3px;
    background: linear-gradient(#bed5f9, #93b5ee);
}
.side-tabs .active {
    background: linear-gradient(#ffe1ae, #ffc069);
}
.props p {
    padding: 9px 5px 23px;
}
.grid-box {
    display: flex;
    height: 183px;
    margin: 0 6px;
    padding-left: 14px;
    border: 1px solid #7ba0da;
    background: #a6c5f2;
    overflow: hidden;
}
.prop-table {
    flex: 1;
    table-layout: fixed;
    border-collapse: collapse;
    background: #fff;
}
.prop-table tr {
    height: 20px;
}
.prop-table th, .prop-table td {
    padding: 0 3px;
    border-bottom: 1px solid #a6c5f2;
    font-weight: normal;
    text-align: left;
    line-height: 17px;
}
.prop-table th {
    width: 107px;
    border-right: 1px solid #a6c5f2;
}
.prop-table .flush {
    padding: 0 0 0 1px;
}
.cur th {
    background: #a6c5f2;
}
.cur select {
    display: block;
    width: 100%;
    height: 19px;
    padding-left: 2px;
    background: url("data:image/svg+xml,%3Csvg xmlns='http://www.w3.org/2000/svg' width='17' height='19'%3E%3Cpath d='M.5.5h16v18H.5z' fill='%23e5e5e5' stroke='%23aaa'/%3E%3Cpath d='M4 8l4 4 4-4' fill='none' stroke='%23444'/%3E%3C/svg%3E") right no-repeat;
}
.gray {
    color: #888;
}
.chip {
    display: block;
    width: 48px;
    height: 18px;
    border: 1px solid #000;
}
.red { background: #f00; }
.black { background: #000; }
.btn {
    height: 21px;
    border: 1px solid #adadad;
    background: #e1e1e1;
    line-height: 17px;
    white-space: nowrap;
}
.conv {
    display: block;
    width: 98px;
    height: 16px;
    font-size: 10px;
    line-height: 14px;
}
.vbar, .hbar {
    display: flex;
    align-items: center;
    justify-content: space-between;
    background: #f0f0f0;
    color: #555;
}
.vbar {
    flex-direction: column;
    width: 16px;
    padding: 4px 0;
}
.hbar {
    height: 16px;
    padding: 0 4px;
}
.vbar svg, .hbar svg {
    width: 9px;
    height: 9px;
}
.pale {
    color: #bbb;
}
.thumb {
    background: #cdcdcd;
}
.vbar .thumb {
    width: 16px;
    height: 78px;
    margin-bottom: 20px;
}

/* documents */
.docs {
    flex: 1;
    min-width: 0;
    display: flex;
    flex-direction: column;
    padding-left: 4px;
    background: #dce8fb;
}
.doc-tabs {
    display: flex;
    align-items: flex-end;
    height: 24px;
    padding-left: 7px;
    background: linear-gradient(#c2d8fb, #f6f9ff);
}
.slant {
    width: 22px;
    height: 20px;
}
.doc-tab {
    display: flex;
    align-items: center;
    height: 20px;
    margin-left: -2px;
    padding-right: 4px;
    border: 1px solid #445;
    border-width: 1px 1px 0 0;
    border-radius: 0 3px 0 0;
    background: linear-gradient(#fff3df, #ffbe5f);
}
.doc-tab .ic {
    width: 16px;
    margin-right: 3px;
}
.tiny {
    width: 9px;
    height: 9px;
    margin-left: 8px;
}
.doc-nav {
    display: flex;
    gap: 3px;
    margin-left: auto;
    padding: 0 2px 8px;
}
.doc-nav svg {
    width: 10px;
    height: 10px;
}
.doc-nav button {
    width: 11px;
}
.desktop {
    position: relative;
    flex: 1;
    min-height: 0;
    margin-bottom: 1px;
    border: 2px solid #666;
    border-color: #555 #f8e6c4 #f8e6c4 #666;
    background: #9099ae;
}
.mdi {
    position: absolute;
    left: 3px;
    top: 0;
    width: 371px;
    padding: 0 8px 9px 7px;
    border: 1px solid #445;
    border-radius: 6px 6px 0 0;
    background: linear-gradient(#b9cddd, #d3e2f2 40px);
}
.mdi-title {
    display: flex;
    align-items: center;
    gap: 5px;
    height: 31px;
    padding-top: 6px;
    color: #99a;
}
.mdi-title .ic {
    width: 16px;
}
.screen {
    height: 273px;
    padding: 17px 0 16px 16px;
    border: 1px solid #667;
    border-width: 1px 0 0 1px;
    background: linear-gradient(90deg, #2c6bb0 16px, transparent 16px), linear-gradient(#2c6bb0 50%, #289aac 50%);
}
.dots {
    position: relative;
    height: 239px;
    background:
        linear-gradient(90deg, transparent 1px, #c0c0c0 1px) 0 0 / 16px 16px,
        linear-gradient(#fff 1px, #c0c0c0 1px) 0 0 / 16px 16px;
}
.label {
    position: absolute;
    left: 97px;
    top: 48px;
    font-size: 16px;
    color: #e01818;
    white-space: nowrap;
}
.handles {
    position: absolute;
    left: 91px;
    top: 44px;
    width: 10px;
    height: 24px;
}

/* data list window */
.list-win {
    position: absolute;
    right: 4px;
    top: 56px;
    width: 309px;
    height: 344px;
    display: flex;
    flex-direction: column;
    border: 2px solid #082f94;
    background: #f0f0f0;
}
.list-body {
    flex: 1;
    display: flex;
    flex-direction: column;
    padding: 5px 17px 11px 5px;
}
.list-cap {
    display: flex;
    gap: 36px;
}
.list-opts {
    display: grid;
    grid-template-columns: 117px 99px 1fr;
    padding: 13px 0 7px 16px;
    white-space: nowrap;
}
input[type="checkbox"], input[type="radio"] {
    appearance: none;
    flex: none;
    width: 13px;
    height: 13px;
    border: 1px solid #333;
    background: #fff;
}
input[type="radio"] {
    border-radius: 50%;
}
input[type="radio"]:checked {
    background: radial-gradient(circle, #222 3px, #fff 4px);
}
input[type="checkbox"]:checked {
    background: url("data:image/svg+xml,%3Csvg xmlns='http://www.w3.org/2000/svg' viewBox='0 0 11 11'%3E%3Cpath d='M1 5l3 3 6-6' fill='none' stroke='%23333' stroke-width='1.300'/%3E%3C/svg%3E") #fff;
}
label {
    display: flex;
    align-items: center;
    gap: 2px;
}
.list-box {
    flex: 1;
    display: flex;
    flex-direction: column;
    justify-content: space-between;
    margin-left: 13px;
    padding: 1px;
    border: 1px solid #828790;
    background: #fff;
    overflow: hidden;
}
.list-box table {
    table-layout: fixed;
    width: 261px;
    margin-left: 4px;
    border-collapse: collapse;
}
.list-box th, .list-box td {
    padding: 0;
    font-weight: normal;
    text-align: left;
    white-space: nowrap;
}
.list-box th {
    height: 24px;
    padding-left: 6px;
    border-right: 1px solid #ddd;
}
.list-box th:first-child {
    width: 115px;
    padding-left: 1px;
}
.list-box th:nth-child(2) {
    width: 100px;
}
.list-box th:last-child {
    border: 0;
}
.sel td {
    height: 20px;
    padding-left: 4px;
    background: #0078e8;
    color: #fff;
}
.list-box .pos {
    padding-left: 13px;
}
.hbar .thumb {
    width: 153px;
    height: 16px;
    margin-right: auto;
    margin-left: 5px;
}

/* text dialog */
.dialog {
    position: absolute;
    left: 170px;
    top: 5px;
    width: 514px;
    height: 405px;
    border: 1px solid #80cc60;
    background: #f0f0f0;
    box-shadow: 2px 4px 12px #0007;
}
.dlg-title {
    display: flex;
    align-items: center;
    justify-content: space-between;
    height: 26px;
    padding: 0 9px 0 3px;
    background: #fff;
}
.dlg-title svg {
    width: 12px;
    height: 12px;
}
.dlg-body {
    padding: 8px 19px 0 11px;
}
.dlg-top {
    display: flex;
    justify-content: space-between;
}
.area {
    display: grid;
    grid-template: 1fr 16px / 1fr 16px;
    width: 365px;
    height: 96px;
    margin-top: 4px;
    padding: 1px;
    border: 1px solid #777;
    background: #f0f0f0;
}
.area textarea {
    resize: none;
    background: #fff;
    overflow: hidden;
    outline: 0;
}
.area .vbar {
    padding-top: 6px;
}
.actions {
    display: flex;
    flex-direction: column;
    gap: 6px;
    width: 97px;
    padding-top: 21px;
}
.actions .art {
    height: 19px;
    margin-top: 21px;
}
.row {
    display: flex;
    align-items: center;
    height: 28px;
}
.font-row {
    height: 34px;
    margin-bottom: 26px;
}
.lb {
    flex: none;
    width: 84px;
}
.row select {
    height: 21px;
    padding-left: 3px;
    border: 1px solid #707070;
    background: url("data:image/svg+xml,%3Csvg xmlns='http://www.w3.org/2000/svg' width='16' height='10'%3E%3Cpath d='M3 3l4 4 4-4' fill='none' stroke='%23555' stroke-width='1.200'/%3E%3C/svg%3E") right center no-repeat #fff;
}
.row .face {
    border-color: #adadad;
    background-color: #e3e3e3;
}
.row select:disabled {
    border-color: #bbb;
    background-color: #ccc;
    color: #777;
    opacity: 1;
}
.w-font { width: 210px; }
.w-size { width: 56px; }
.w-kan { width: 114px; }
.w-cat { width: 104px; }
.times {
    width: 19px;
    text-align: center;
}
.hint {
    margin-left: 5px;
}
.swatch {
    width: 60px;
    height: 18px;
    border: 1px solid #000;
}
.swatch.dark {
    border-color: #666;
    background: #666;
}
.pick {
    display: grid;
    place-items: center;
    width: 14px;
    height: 18px;
    background: #ccc;
}
.pick::after {
    content: "";
    border: 4px solid transparent;
    border-top-color: #000;
    border-bottom: 0;
}
.focus {
    border: 2px solid #0078d7;
    background: #e5e5e5;
}
.bsr {
    display: flex;
    gap: 2px;
    margin-left: 107px;
}
.bsr button, .al button {
    width: 24px;
    height: 22px;
    border: 1px solid #b5b5b5;
    background: #e1e1e1;
    font: bold 20px/20px "Liberation Sans", sans-serif;
}
.bsr .shade {
    text-shadow: 2px 2px 0 #aaa;
}
.dir {
    width: 69px;
}
.al-lb {
    width: 32px;
    margin-left: 4px;
    color: #999;
}
.al {
    display: flex;
    gap: 2px;
}
.al button {
    display: grid;
    place-items: center;
    background: #ccc;
}
.al .down {
    background: #bbb;
}
.al svg {
    width: 14px;
    height: 14px;
}
.spin {
    display: flex;
    align-items: center;
    width: 52px;
    height: 20px;
    border: 1px solid #b5b5b5;
}
.spin input {
    width: 34px;
    padding-left: 2px;
}
.spin svg {
    width: 15px;
    height: 14px;
    background: #e5e5e5;
    color: #555;
}
.kanji {
    width: 66px;
    margin-left: 59px;
}
.dlg-foot {
    display: flex;
    justify-content: flex-end;
    gap: 15px;
    padding-right: 10px;
}
.dlg-foot .btn {
    width: 63px;
}

/* right dock */
.dock {
    width: 22px;
    padding: 2px 0 0 3px;
}
.lib {
    width: 19px;
    height: 40px;
    border: 1px solid #556;
    border-right: 0;
    border-radius: 3px 0 0 3px;
    background: linear-gradient(90deg, #ffe6bd, #ffb95e);
}
.lib span {
    display: block;
    transform: rotate(90deg);
}
.meter {
    position: absolute;
    right: 0;
    top: 37px;
    width: 10px;
    height: 59px;
    padding: 6px 0 6px 4px;
    border: 1px solid #333a48;
    border-width: 1px 0 1px 1px;
    border-radius: 4px 0 0 4px;
    background: #4a5163;
}
.meter::before {
    content: "";
    display: block;
    height: 100%;
    background:
        repeating-linear-gradient(transparent 0 2px, #4a5163 2px 3px),
        linear-gradient(#2b303c 25%, #e8c840 26%, #9ad060 60%, #38d0d8);
}

/* lower bars */
.lower {
    display: flex;
    flex-direction: column;
    gap: 2px;
    height: 51px;
    padding-top: 2px;
}
.browser-tab {
    display: flex;
    align-items: center;
    gap: 2px;
    align-self: flex-start;
    height: 20px;
    margin-left: 2px;
    padding: 0 3px;
    border: 1px solid #3b5e9c;
    border-bottom: 0;
    border-radius: 3px 3px 0 0;
    background: linear-gradient(#ffe1ae, #ffc069);
}
.coords label {
    gap: 3px;
    padding: 0 2px;
}
.num {
    display: flex;
    align-items: center;
    width: 51px;
    height: 22px;
    border: 1px solid #fff;
    background: #c3d9fb;
}
.num input {
    width: 35px;
    height: 20px;
    padding-left: 2px;
    background: #fff;
}
.num svg {
    width: 14px;
    height: 14px;
}

/* status bar */
.status {
    display: flex;
    height: 20px;
    border-bottom: 2px solid #0a0a0a;
    background: #f0f0f0;
    line-height: 18px;
}
.status span {
    padding-left: 4px;
    border-left: 1px solid #d4d4d4;
    white-space: nowrap;
}
.status .msg {
    flex: 1;
    padding-left: 2px;
    border: 0;
}
.c-blank { width: 20px; }
.c-type { width: 120px; }
.c-color { width: 52px; }
.c-plc { width: 112px; }
.c-pos {
    display: flex;
    align-items: center;
    gap: 8px;
    width: 88px;
}
.c-pos svg {
    width: 16px;
    height: 16px;
}
.c-xy { width: 116px; }
.c-gap { width: 31px; }
.c-num { width: 41px; }
.c-end { width: 34px; }
```
